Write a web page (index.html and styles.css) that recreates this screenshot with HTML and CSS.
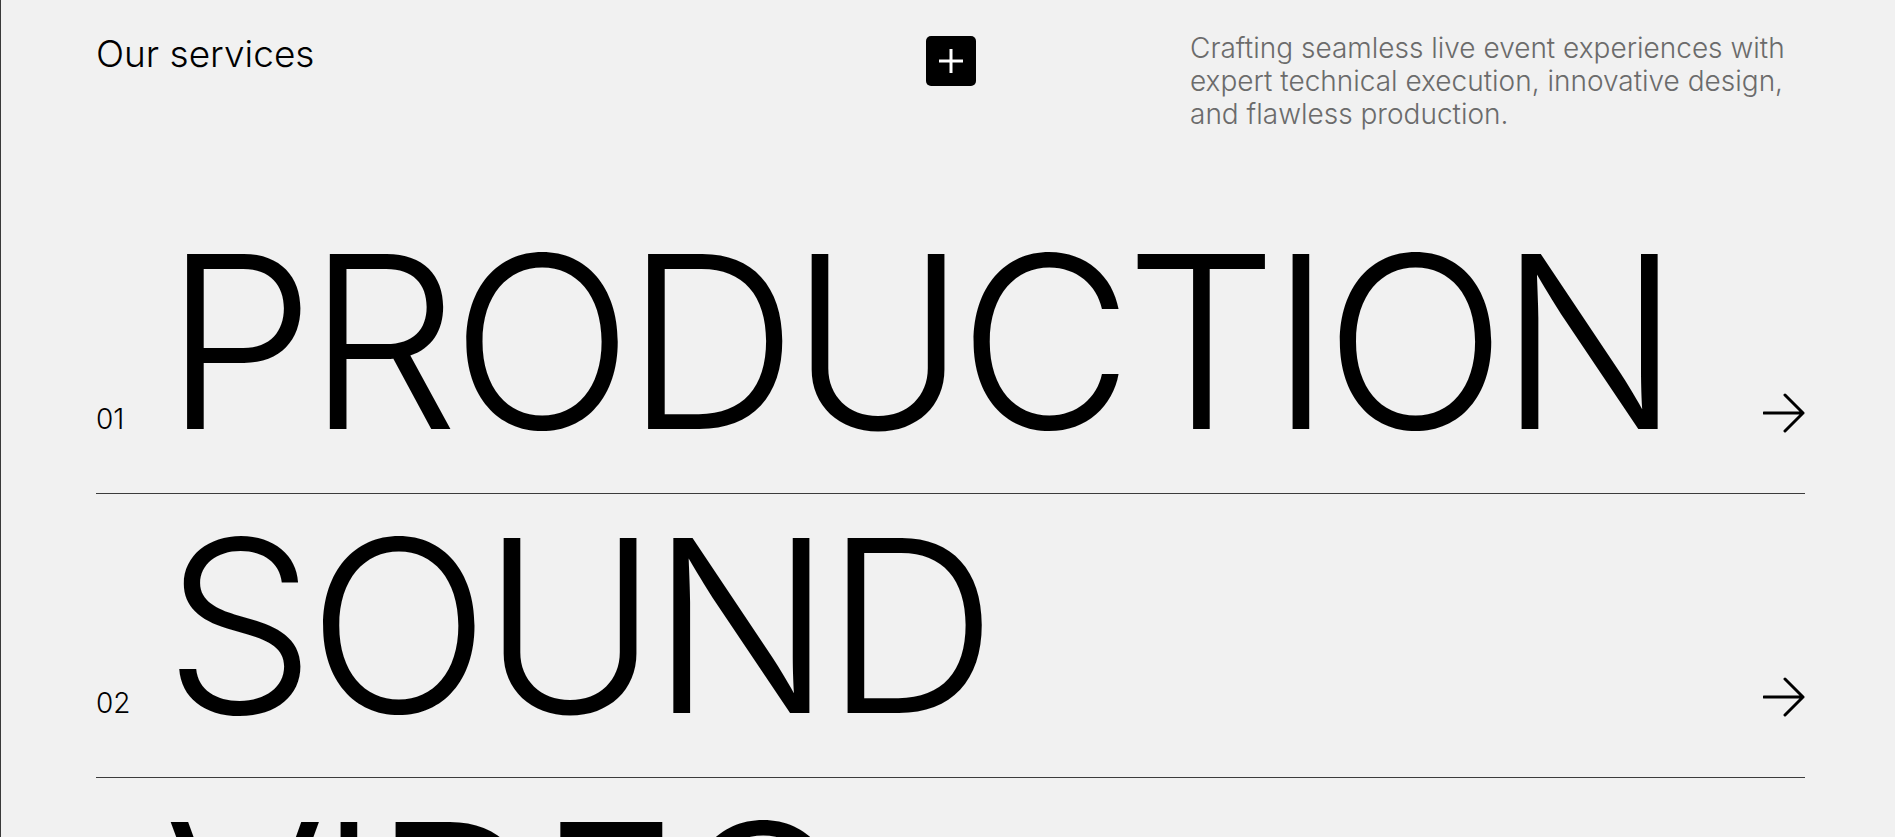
FILE: index.html
```html
<!DOCTYPE html>
<html lang="en">
<head>
<meta charset="utf-8">
<title>Our services</title>
<link rel="stylesheet" href="styles.css">
</head>
<body>
<main class="page">
  <header class="intro">
    <h2 class="intro-title">Our services</h2>
    <button class="plus-btn" aria-label="Open">
      <svg viewBox="0 0 50 50" width="50" height="50" aria-hidden="true">
        <path d="M13 25 H37 M25 13 V37" stroke="#fff" stroke-width="3" fill="none"/>
      </svg>
    </button>
    <p class="intro-text">Crafting seamless live event experiences with expert technical execution, innovative design, and flawless production.</p>
  </header>

  <ul class="services">
    <li class="service">
      <span class="service-num">01</span>
      <span class="service-name">PRODUCTION</span>
      <svg class="service-arrow" viewBox="0 0 42 40" width="42" height="40" aria-hidden="true">
        <path d="M1 20 H40 M22 2 L40 20 L22 38" stroke="#000" stroke-width="3" fill="none" stroke-linecap="round" stroke-linejoin="round"/>
      </svg>
    </li>
    <li class="service">
      <span class="service-num">02</span>
      <span class="service-name">SOUND</span>
      <svg class="service-arrow" viewBox="0 0 42 40" width="42" height="40" aria-hidden="true">
        <path d="M1 20 H40 M22 2 L40 20 L22 38" stroke="#000" stroke-width="3" fill="none" stroke-linecap="round" stroke-linejoin="round"/>
      </svg>
    </li>
    <li class="service">
      <span class="service-num">03</span>
      <span class="service-name">VIDEO</span>
      <svg class="service-arrow" viewBox="0 0 42 40" width="42" height="40" aria-hidden="true">
        <path d="M1 20 H40 M22 2 L40 20 L22 38" stroke="#000" stroke-width="3" fill="none" stroke-linecap="round" stroke-linejoin="round"/>
      </svg>
    </li>
  </ul>
</main>
</body>
</html>
```

FILE: styles.css
```css
* { box-sizing: border-box; }

html, body {
  margin: 0;
  padding: 0;
  background: #f1f1f1;
  height: 100%;
  overflow: hidden;
}

body {
  font-family: Inter, "Liberation Sans", sans-serif;
  font-weight: 300;
  color: #000;
}

.page {
  min-height: 100%;
  border-left: 1px solid #3a3a3a;
  padding: 32px 90px 0 95px;
}

.intro {
  display: grid;
  grid-template-columns: 1fr auto 1fr;
  align-items: start;
  margin-bottom: 79px;
}

.intro-title {
  margin: 0;
  font-size: 37px;
  font-weight: 300;
  line-height: 1.2;
  letter-spacing: 0;
}

.plus-btn {
  margin-top: 4px;
  width: 50px;
  height: 50px;
  padding: 0;
  border: 0;
  border-radius: 5px;
  background: #000;
  display: flex;
  align-items: center;
  justify-content: center;
}

.plus-btn svg { display: block; }

.intro-text {
  justify-self: end;
  width: 615px;
  margin: 0;
  font-size: 28px;
  line-height: 33px;
  color: #6b6b6b;
  font-weight: 300;
}

.services {
  list-style: none;
  margin: 0;
  padding: 0;
}

.service {
  display: flex;
  align-items: baseline;
  padding: 12px 0 31px;
  border-bottom: 1px solid #3c3c3c;
}

.service-num {
  width: 68px;
  flex: none;
  font-size: 28px;
  font-weight: 300;
}

.service-name {
  font-size: 240px;
  line-height: 240px;
  font-weight: 300;
  letter-spacing: -8px;
}

.service-arrow {
  margin-left: auto;
  align-self: flex-end;
  margin-bottom: 29px;
  display: block;
}
```
